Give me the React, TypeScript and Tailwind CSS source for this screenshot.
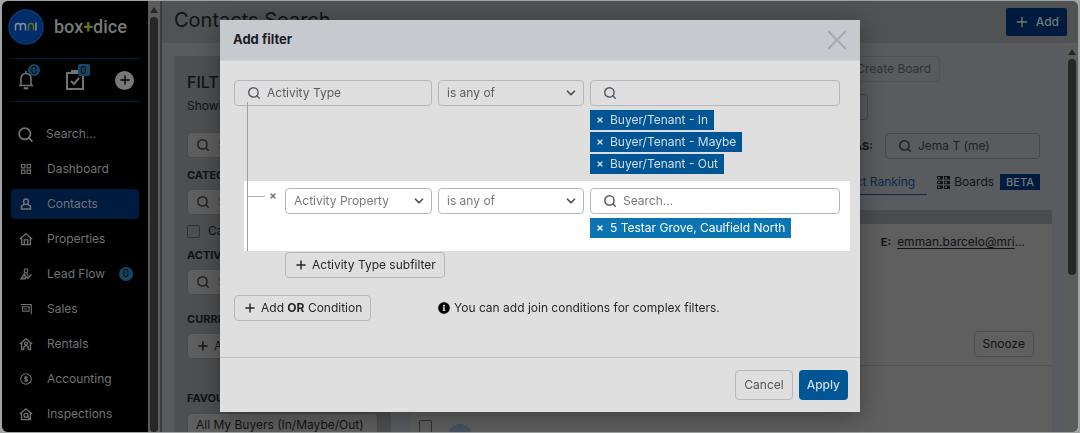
import type { ReactNode } from 'react'
import { ChevronDown, Plus, Search, X } from 'lucide-react'
import { FaInfoCircle } from 'react-icons/fa'

const svgProps = {
  viewBox: '0 0 16 16',
  fill: 'none',
  stroke: 'currentColor',
  strokeWidth: 1.5,
  className: 'h-3 w-3'
}

const icons: Record<string, ReactNode> = {
  Dashboard: (
    <svg {...svgProps}>
      <path d="M2 2h4.5v4.5H2zM9.5 2H14v4.5H9.5zM2 9.5h4.5V14H2zM9.5 9.5H14V14H9.5z" />
    </svg>
  ),
  Contacts: (
    <svg {...svgProps} strokeWidth={2}>
      <ellipse cx="8" cy="5" rx="3.2" ry="3.8" />
      <path d="M5.5 8.5 2 11v3.5h12V11l-3.5-2.5" />
    </svg>
  ),
  Properties: (
    <svg {...svgProps} className="h-3.5 w-3.5">
      <path d="M1 8 8 2l7 6M3 7v7.5h10V7M6 14V9h4v5" />
    </svg>
  ),
  'Lead Flow': (
    <svg {...svgProps}>
      <circle cx="8" cy="3.5" r="2.5" />
      <path d="M7 6 5 10M9 6l2 5" />
      <path d="M5.5 8 1 14.5h6l1-4zM8.5 12l2 2 5-5.5" fill="currentColor" fillOpacity="0.5" />
    </svg>
  ),
  Sales: (
    <svg {...svgProps}>
      <path d="M1 2h14v13M3.5 5H12v6H3.5zM5.5 8h4" />
    </svg>
  ),
  Rentals: (
    <svg {...svgProps} className="h-3.5 w-3.5">
      <path d="M1 8 8 2l7 6M3 7v7.5h2.5M13 7v7.5h-2.5M5.5 14.5v-3l2.5-2 2.5 2v3" />
      <circle cx="8" cy="7.5" r="1.7" />
    </svg>
  ),
  Accounting: (
    <svg {...svgProps}>
      <circle cx="8" cy="8" r="7" />
      <path d="M10 6C9.5 5 6.2 4.8 6.2 6.5S10 8 10 9.6 6.5 11.3 6 10M8 4v8" />
    </svg>
  ),
  Inspections: (
    <svg {...svgProps} className="h-3.5 w-3.5">
      <path d="M1 8 8 2l7 6M3 7v7.5h10V7M10 11l2 2.5" />
      <circle cx="8" cy="9.5" r="2.3" />
    </svg>
  )
}

const tags = ['Buyer/Tenant - In', 'Buyer/Tenant - Maybe', 'Buyer/Tenant - Out']

function Sidebar() {
  return (
    <aside className="flex w-[146px] shrink-0 flex-col bg-black text-[#6f7375]">
      <div className="flex h-[57px] items-center gap-2.5 pb-1.5 pl-1.5">
        <svg viewBox="0 0 36 36" className="h-9 w-9 shrink-0">
          <circle cx="18" cy="18" r="17" fill="#002d69" stroke="#053c74" strokeWidth="1.5" />
          <path
            d="M7.5 21.5V17q0-2.5 2.5-2.5t2.5 2.5v4.5m0-4.5q0-2.5 2.5-2.5t2.5 2.5v4.5"
            fill="none"
            stroke="#858d99"
            strokeWidth="1.5"
          />
          <path d="M20.5 21.5V17q0-2.5 2.5-2.5t2.5 2.5v4.5" fill="none" stroke="#5c7112" strokeWidth="1.5" />
          <path d="M28 13.5v8" stroke="#858d99" strokeWidth="1.5" />
        </svg>
        <span className="font-['Roboto',sans-serif] text-lg font-medium text-[#777979]">
          box<span className="font-bold text-[#65730c]">+</span>dice
        </span>
      </div>
      <div className="mx-2 flex h-11 items-center justify-between border-y border-[#001b40] pr-1.5 pl-2">
        <button aria-label="Notifications" className="relative">
          <svg viewBox="0 0 16 20" className="h-5 w-4" fill="none" stroke="currentColor" strokeWidth="1.6">
            <path d="M1 15.5h14M3 15.5V9q0-5.5 5-5.5T13 9v6.5M8 3.5V1" />
            <path d="M6 17.5q2 2 4 0" strokeWidth="2" />
          </svg>
          <span className="absolute -top-1.5 left-2.5 grid h-3 w-3 place-items-center rounded-full bg-[#194564] text-[10px] text-black">
            0
          </span>
        </button>
        <button aria-label="Tasks" className="relative">
          <svg viewBox="0 0 18 20" className="h-5 w-[18px]" fill="none" stroke="currentColor" strokeWidth="2">
            <path d="M1 3h16v16H1zM6 3V1h6v2M5 11l3 3 5-6" />
          </svg>
          <span className="absolute -top-1.5 left-3 grid h-3 w-3 place-items-center rounded-xs bg-[#194564] text-[10px] text-black">
            0
          </span>
        </button>
        <button aria-label="Create" className="grid h-[19px] w-[19px] place-items-center rounded-full bg-[#777979] text-black">
          <Plus className="h-3.5 w-3.5" strokeWidth={2.5} />
        </button>
      </div>
      <nav className="mt-[17px] flex flex-col gap-[5px] px-[9px] text-xs">
        <a href="#search" className="flex h-[30px] items-center gap-3 pl-1.5">
          <Search className="h-[17px] w-[17px]" strokeWidth={2.5} />
          Search...
        </a>
        {Object.keys(icons).map((name) => (
          <a
            key={name}
            href="#nav"
            className={`flex h-[30px] items-center rounded pl-2 ${name === 'Contacts' ? 'bg-[#001b3d]' : ''}`}
          >
            <span className="grid w-3.5 place-items-center">{icons[name]}</span>
            <span className="ml-3.5">{name}</span>
            {name === 'Lead Flow' && (
              <span className="ml-auto mr-1.5 grid h-3.5 w-3.5 place-items-center rounded-full bg-[#194564] text-[10px] text-black">
                0
              </span>
            )}
          </a>
        ))}
      </nav>
    </aside>
  )
}

function ScrollBar({ thumb }: { thumb: string }) {
  return (
    <div className="flex w-3 shrink-0 flex-col items-center gap-1 bg-[#5c5c5c] pt-1.5">
      <svg viewBox="0 0 8 6" className="h-1.5 w-2 shrink-0" fill="#272727">
        <path d="M4 0l4 6H0z" />
      </svg>
      <div className={`w-2 rounded-full bg-[#272727] ${thumb}`} />
    </div>
  )
}

function PanelSearch({ label }: { label: string }) {
  return (
    <label className="flex h-[26px] shrink-0 items-center gap-2 rounded border border-[#4a4b4c] bg-[#5f5f5f] px-2">
      <Search className="h-3.5 w-3.5 shrink-0 text-[#1e2126]" strokeWidth={2.5} />
      <input aria-label={label} placeholder="Search..." className="w-full min-w-0 bg-transparent placeholder:text-[#3c3f42]" />
    </label>
  )
}

function FilterPanel() {
  return (
    <section className="flex w-[217px] shrink-0 flex-col bg-[#4d4f51] px-[13px] pt-4">
      <h2 className="text-base leading-5 font-medium">FILTERS</h2>
      <p className="mt-1 text-xs leading-5">Showing all</p>
      <div className="mt-4">
        <PanelSearch label="Search contacts" />
      </div>
      <h3 className="mt-[9px] mb-1.5 text-[11px] leading-4 font-bold">CATEGORY</h3>
      <PanelSearch label="Category" />
      <label className="mt-2 flex h-4 shrink-0 items-center gap-2">
        <input type="checkbox" className="h-[13px] w-[13px] appearance-none rounded-xs border border-[#303234]" />
        Categories
      </label>
      <h3 className="mt-2 mb-1.5 text-[11px] leading-4 font-bold">ACTIVITY</h3>
      <PanelSearch label="Activity" />
      <h3 className="mt-4 mb-1.5 text-[11px] leading-4 font-bold">CURRENT</h3>
      <button className="flex h-[26px] w-fit shrink-0 items-center gap-1 rounded border border-[#4a4b4c] bg-[#5f5f5f] px-2">
        <Plus className="h-3.5 w-3.5" strokeWidth={2.5} />
        Add
      </button>
      <h3 className="mt-[31px] mb-[7px] text-[11px] leading-4 font-bold">FAVOURITES</h3>
      <button className="h-6 shrink-0 rounded border border-[#4a4b4c] bg-[#5f5f5f] px-2 text-left">
        All My Buyers (In/Maybe/Out)
      </button>
    </section>
  )
}

function Results() {
  return (
    <section className="flex min-w-0 flex-1 flex-col">
      <div className="flex h-[26px] shrink-0 justify-end pr-[112px]">
        <button className="rounded border border-[#505254] px-2 text-[#303234]">Create Board</button>
      </div>
      <div className="mt-3 flex h-[26px] shrink-0 justify-end pr-[184px]">
        <select aria-label="Sort by" className="w-40 appearance-none rounded border border-[#454749] px-2">
          <option>Ranking</option>
        </select>
      </div>
      <div className="mt-[13px] flex h-[26px] shrink-0 items-center justify-end gap-3 pr-3">
        <span className="text-[11px] font-bold">VIEW AS:</span>
        <label className="flex h-[26px] w-[155px] items-center gap-1.5 rounded border border-[#454749] pl-3 text-[#1e2126]">
          <Search className="h-3.5 w-3.5 shrink-0" strokeWidth={2.5} />
          <input aria-label="View as" defaultValue="Jema T (me)" className="w-full min-w-0 bg-transparent" />
        </label>
      </div>
      <div className="mt-1.5 flex h-[34px] shrink-0 items-center justify-end pr-3">
        <a href="#ranking" className="flex h-[26px] items-center border-b border-[#0a2b4c] px-3 text-[#0a2b4c]">
          Contact Ranking
        </a>
        <a href="#boards" className="ml-2.5 flex items-center gap-1">
          <svg viewBox="0 0 13 13" className="h-[13px] w-[13px]" fill="currentColor">
            <path
              fillRule="evenodd"
              d="M0 0h6v3.5H0zM1 1v1.5h2V1zM7 0h6v3.5H7zM8 1v1.5h2V1zM0 4.7h6v3.5H0zM1 5.7v1.5h2V5.7zM7 4.7h6v3.5H7zM8 5.7v1.5h2V5.7zM0 9.4h6V13H0zM1 10.4V12h2v-1.6zM7 9.4h6V13H7zM8 10.4V12h2v-1.6z"
            />
          </svg>
          Boards
        </a>
        <span className="ml-1.5 bg-[#001b3d] px-1.5 text-[11px] leading-4 font-medium text-[#74787c]">BETA</span>
      </div>
      <div className="mt-[11px] flex flex-1 flex-col bg-[#5f5f5f]">
        <div className="h-3.5 shrink-0 bg-[#4a4c50]" />
        <div className="flex h-[142px] shrink-0 flex-col items-end justify-between border-b border-[#515355] pt-2.5 pb-2">
          <p className="pr-[27px]">
            <b className="mr-1.5 text-[11px]">E:</b>
            <a href="#email" className="underline underline-offset-2">emman.barcelo@mri</a>...
          </p>
          <button className="mr-[18px] h-[26px] rounded border border-[#4a4c4e] px-2">Snooze</button>
        </div>
        <div className="flex gap-4 pt-[54px] pl-2">
          <input type="checkbox" aria-label="Select contact" className="h-[13px] w-[13px] appearance-none rounded-xs border border-[#303234]" />
          <span className="mt-1 h-6 w-6 rounded-full bg-[#445260]" />
        </div>
      </div>
    </section>
  )
}

function SelectBox({ label, value, className }: { label: string; value: string; className: string }) {
  return (
    <div className={`grid shrink-0 grid-cols-1 items-center self-start ${className}`}>
      <select
        aria-label={label}
        className="col-start-1 row-start-1 h-[26px] appearance-none rounded border border-[#b4b7bb] bg-transparent px-2"
      >
        <option>{value}</option>
      </select>
      <ChevronDown className="pointer-events-none col-start-1 row-start-1 mr-1.5 h-3.5 w-3.5 justify-self-end text-[#4b4e52]" strokeWidth={3} />
    </div>
  )
}

function SearchBox({ label, value, placeholder }: { label: string; value?: string; placeholder?: string }) {
  return (
    <label className="flex h-[26px] items-center gap-1.5 rounded border border-[#b4b7bb] px-3">
      <Search className="h-3.5 w-3.5 shrink-0 text-[#555b66]" strokeWidth={2.5} />
      <input
        aria-label={label}
        defaultValue={value}
        placeholder={placeholder}
        className="w-full min-w-0 bg-transparent text-[#5a5d60] placeholder:text-[#777b80]"
      />
    </label>
  )
}

function Tag({ name, color }: { name: string; color: string }) {
  return (
    <span className={`flex h-5 w-fit items-center gap-1.5 px-1.5 ${color}`}>
      <button aria-label={`Remove ${name}`}>
        <X className="h-2 w-2" strokeWidth={4} />
      </button>
      {name}
    </span>
  )
}

function FilterDialog() {
  return (
    <div
      role="dialog"
      aria-label="Add filter"
      className="w-full max-w-[640px] bg-[#dfdfdf] text-[#24272a] shadow-[0_4px_24px_rgba(0,0,0,0.35)]"
    >
      <header className="flex h-[41px] items-center justify-between border-b border-[#cfd2d6] bg-[#c6c9ce] pr-[7px] pl-[13px]">
        <h1 className="text-[13px] font-bold text-[#1b1d26]">Add filter</h1>
        <button aria-label="Close" className="text-[#a6a9af]">
          <X className="h-8 w-8" strokeWidth={1.5} />
        </button>
      </header>
      <div className="pt-[19px] pb-9">
        <div className="relative">
          <div className="flex gap-1.5 pr-5 pl-3.5">
            <div className="w-[198px] shrink-0">
              <SearchBox label="Field" value="Activity Type" />
            </div>
            <SelectBox label="Operator" value="is any of" className="w-[146px] text-[#5a5d60]" />
            <div className="min-w-0 flex-1">
              <SearchBox label="Activity type values" />
              <div className="mt-1 flex flex-col gap-0.5 text-[#d4dde6]">
                {tags.map((tag) => (
                  <Tag key={tag} name={tag} color="bg-[#005695]" />
                ))}
              </div>
            </div>
          </div>
          <div className="mt-[7px] mr-2.5 ml-6 flex gap-1.5 bg-white pt-[7px] pr-2.5 pb-[13px] pl-[3px]">
            <div className="flex w-8 shrink-0 items-start gap-1">
              <span className="mt-2 h-px w-[18px] bg-[#aeb6bd]" />
              <button aria-label="Remove subfilter" className="mt-1 text-[#6d7176]">
                <X className="h-2 w-2" strokeWidth={4} />
              </button>
            </div>
            <SelectBox label="Subfilter field" value="Activity Property" className="w-[147px] text-[#777b80]" />
            <SelectBox label="Subfilter operator" value="is any of" className="w-[146px] text-[#777b80]" />
            <div className="min-w-0 flex-1">
              <SearchBox label="Property values" placeholder="Search..." />
              <div className="mt-1 text-white">
                <Tag name="5 Testar Grove, Caulfield North" color="bg-[#0b74b2]" />
              </div>
            </div>
          </div>
          <span className="absolute top-[22px] bottom-0 left-[27px] w-px bg-[#9aa1a7]" />
        </div>
        <button className="mt-px ml-[65px] flex h-[26px] items-center gap-1 rounded border border-[#b4b7bb] px-2">
          <Plus className="h-3.5 w-3.5" strokeWidth={2.5} />
          Activity Type subfilter
        </button>
        <div className="mt-[17px] flex items-center pl-3.5">
          <div className="w-[204px]">
            <button className="flex h-[26px] items-center gap-1 rounded border border-[#b4b7bb] px-2">
              <Plus className="h-3.5 w-3.5" strokeWidth={2.5} />
              <span>
                Add <b>OR</b> Condition
              </span>
            </button>
          </div>
          <FaInfoCircle className="mr-1 h-3 w-3 text-black" />
          <p>You can add join conditions for complex filters.</p>
        </div>
      </div>
      <footer className="flex justify-end gap-1.5 border-t border-[#c0c2c9] py-3 pr-3">
        <button className="h-[30px] rounded border border-[#b4b7bb] px-2 text-[#505356]">Cancel</button>
        <button className="h-[30px] rounded bg-[#005695] px-2 font-medium text-[#d4dde6]">Apply</button>
      </footer>
    </div>
  )
}

export default function App() {
  return (
    <div className="h-screen bg-[#a3a5a5] px-0.5 py-px font-[Inter,sans-serif] text-xs text-[#111315]">
      <div className="flex h-full overflow-hidden rounded-md bg-[#595b5e]">
        <Sidebar />
        <ScrollBar thumb="h-full" />
        <div className="flex min-w-0 flex-1 flex-col border-l-2 border-[#3b3c3e]">
          <header className="flex h-[42px] shrink-0 items-center justify-between bg-[#505253] pr-[11px] pl-3">
            <h1 className="pb-1 text-xl leading-5">Contacts Search</h1>
            <button className="flex h-7 items-center gap-1.5 rounded-xs bg-[#001b3d] px-2 font-medium text-[#74787c]">
              <Plus className="h-4 w-4" strokeWidth={2} />
              Add
            </button>
          </header>
          <div className="flex min-h-0 flex-1">
            <main className="flex min-w-0 flex-1 gap-5 overflow-hidden pt-[13px] pr-3.5 pl-3">
              <FilterPanel />
              <Results />
            </main>
            <ScrollBar thumb="h-[216px]" />
          </div>
        </div>
      </div>
      <div className="fixed inset-0 flex items-start justify-center pt-5">
        <FilterDialog />
      </div>
    </div>
  )
}
